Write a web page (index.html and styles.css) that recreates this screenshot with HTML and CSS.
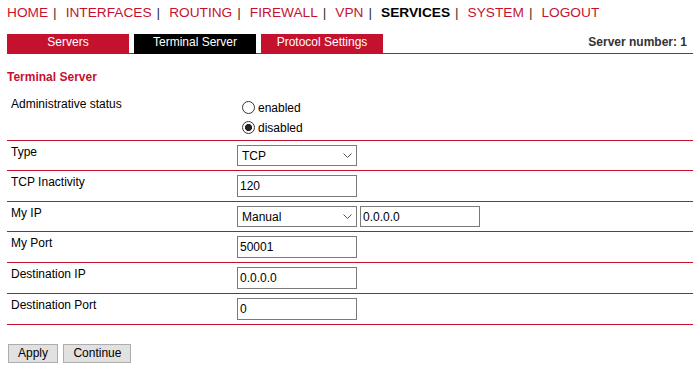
FILE: index.html
```html
<!DOCTYPE html>
<html lang="en">

<head>
    <meta charset="UTF-8">
    <meta name="viewport" content="width=device-width, initial-scale=1.0">
    <title>Terminal Server</title>
    <link rel="stylesheet" href="styles.css">
</head>

<body>
    <div class="page">
        <div class="topnav">
            <a href="#">HOME</a><span class="sep">|</span>
            <a href="#">INTERFACES</a><span class="sep">|</span>
            <a href="#">ROUTING</a><span class="sep">|</span>
            <a href="#">FIREWALL</a><span class="sep">|</span>
            <a href="#">VPN</a><span class="sep">|</span>
            <a href="#" class="current">SERVICES</a><span class="sep">|</span>
            <a href="#">SYSTEM</a><span class="sep">|</span>
            <a href="#">LOGOUT</a>
        </div>

        <div class="tabbar">
            <a href="#" class="tab">Servers</a>
            <a href="#" class="tab active">Terminal Server</a>
            <a href="#" class="tab">Protocol Settings</a>
            <span class="server-no">Server number: 1</span>
        </div>

        <h3 class="section-title">Terminal Server</h3>

        <form id="tsForm" action="#" method="POST">
            <table class="settings">
                <tr class="status-row">
                    <td class="label">Administrative status</td>
                    <td class="value">
                        <label class="radio-opt"><input type="radio" name="status" value="enabled">enabled</label>
                        <label class="radio-opt"><input type="radio" name="status" value="disabled" checked>disabled</label>
                    </td>
                </tr>
                <tr>
                    <td class="label">Type</td>
                    <td class="value">
                        <span class="select-wrap">
                            <select name="type">
                                <option>TCP</option>
                                <option>UDP</option>
                            </select>
                            <svg class="chevron" width="9" height="5" viewBox="0 0 9 5"><path d="M0.5 0.5 L4.5 4.5 L8.5 0.5" fill="none" stroke="#555" stroke-width="1"/></svg>
                        </span>
                    </td>
                </tr>
                <tr>
                    <td class="label">TCP Inactivity</td>
                    <td class="value"><input type="text" name="inactivity" value="120"></td>
                </tr>
                <tr>
                    <td class="label">My IP</td>
                    <td class="value">
                        <div class="field">
                            <span class="select-wrap">
                                <select name="myip_mode">
                                    <option>Manual</option>
                                    <option>Auto</option>
                                </select>
                                <svg class="chevron" width="9" height="5" viewBox="0 0 9 5"><path d="M0.5 0.5 L4.5 4.5 L8.5 0.5" fill="none" stroke="#555" stroke-width="1"/></svg>
                            </span>
                            <input type="text" name="myip" value="0.0.0.0">
                        </div>
                    </td>
                </tr>
                <tr>
                    <td class="label">My Port</td>
                    <td class="value"><input type="text" name="myport" value="50001"></td>
                </tr>
                <tr>
                    <td class="label">Destination IP</td>
                    <td class="value"><input type="text" name="dstip" value="0.0.0.0"></td>
                </tr>
                <tr>
                    <td class="label">Destination Port</td>
                    <td class="value"><input type="text" name="dstport" value="0"></td>
                </tr>
            </table>

            <div class="actions">
                <button type="submit">Apply</button>
                <button type="button">Continue</button>
            </div>
        </form>
    </div>
</body>

</html>
```

FILE: styles.css
```css
body {
    margin: 0;
    font-family: "Liberation Sans", Arial, sans-serif;
    font-size: 12px;
    color: #000;
    background-color: #fff;
}

.page {
    width: 686px;
    padding: 5px 0 0 7px;
}

/* top menu */
.topnav {
    display: flex;
    font-size: 13.7px;
    line-height: 15px;
    height: 15px;
    white-space: nowrap;
}

.topnav a {
    color: #c8102e;
    text-decoration: none;
}

.topnav a.current {
    color: #000;
    font-weight: bold;
}

.topnav .sep {
    color: #333;
    margin: 0 9px 0 5px;
}

/* tabs */
.tabbar {
    display: flex;
    align-items: flex-start;
    height: 19px;
    margin-top: 14px;
    border-bottom: 1px solid #c4122e;
}

.tab {
    width: 122px;
    height: 20px;
    margin-right: 5px;
    margin-bottom: -1px;
    line-height: 17px;
    text-align: center;
    color: #fff;
    background-color: #c4122e;
    text-decoration: none;
}

.tab.active {
    background-color: #000;
}

.server-no {
    margin-left: auto;
    padding-right: 6px;
    line-height: 17px;
    font-weight: bold;
    color: #333;
}

.section-title {
    margin: 16px 0 9px;
    font-size: 12px;
    line-height: 14px;
    color: #c4122e;
}

/* settings table */
.settings {
    width: 686px;
    border-collapse: separate;
    border-spacing: 0;
    table-layout: fixed;
}

.settings td {
    padding: 4px 0;
    vertical-align: top;
    border-bottom: 1px solid #c4122e;
    line-height: 14px;
}

.settings td.label {
    width: 226px;
    padding-left: 4px;
}

.status-row td.value {
    padding-top: 5px;
    padding-bottom: 2px;
}

.radio-opt {
    display: block;
    height: 20px;
    line-height: 20px;
}

input[type="radio"] {
    appearance: none;
    width: 13px;
    height: 13px;
    margin: 0 3px 0 5px;
    border: 1px solid #333;
    border-radius: 50%;
    background-color: #fff;
    vertical-align: middle;
    position: relative;
    top: -1px;
}

input[type="radio"]:checked {
    background: radial-gradient(circle, #222 0 3.3px, #fff 3.8px);
}

.field {
    display: flex;
    gap: 3px;
}

.select-wrap {
    position: relative;
    display: inline-block;
    vertical-align: top;
}

select {
    appearance: none;
    width: 120px;
    height: 21px;
    padding: 0 0 0 4px;
    margin: 0;
    border: 1px solid #7a7a7a;
    border-radius: 0;
    background-color: #fff;
    font-family: "Liberation Sans", Arial, sans-serif;
    font-size: 12px;
    color: #000;
    display: block;
}

.chevron {
    position: absolute;
    right: 5px;
    top: 8px;
    pointer-events: none;
}

input[type="text"] {
    width: 120px;
    height: 22px;
    margin: 0;
    padding: 0 2px;
    border: 1px solid #7a7a7a;
    box-sizing: border-box;
    font-family: "Liberation Sans", Arial, sans-serif;
    font-size: 12px;
    color: #000;
    vertical-align: top;
}

.field input[type="text"] {
    height: 21px;
}

/* buttons */
.actions {
    margin-top: 19px;
    padding-left: 1px;
}

button {
    height: 19px;
    padding: 0 9px;
    margin: 0 2px 0 0;
    border: 1px solid #adadad;
    background-color: #e1e1e1;
    font-family: "Liberation Sans", Arial, sans-serif;
    font-size: 12px;
    line-height: 17px;
    color: #000;
    cursor: pointer;
}

button:hover {
    background-color: #e5f1fb;
}
```
